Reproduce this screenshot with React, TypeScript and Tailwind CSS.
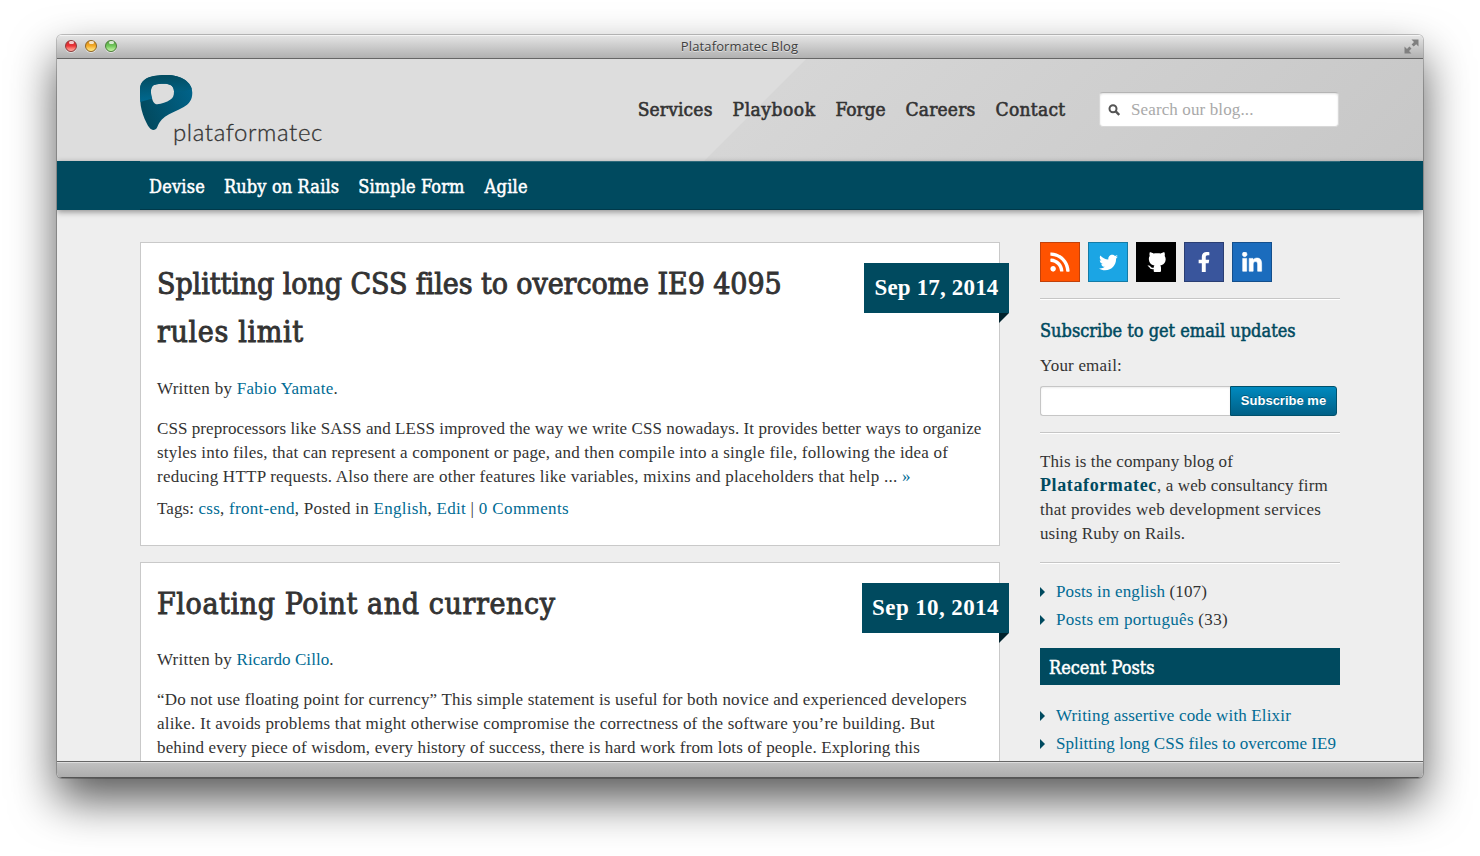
import type { ReactNode } from "react";
import { FaFacebookF, FaLinkedinIn, FaRss, FaTwitter } from "react-icons/fa";

const serif = "font-['Liberation_Serif',serif]";
const slab = "font-['DejaVu_Serif_Condensed','DejaVu_Serif',serif]";

function A({ children }: { children: ReactNode }) {
  return (
    <a href="#" className="text-[#006b94]">
      {children}
    </a>
  );
}

function TrafficLight({ className }: { className: string }) {
  return (
    <span
      className={`relative h-3 w-3 rounded-full border shadow-[0_1px_0_rgba(255,255,255,0.5)] ${className}`}
    >
      <span className="absolute left-[2.5px] top-0 h-[3px] w-[5px] rounded-full bg-white/75" />
    </span>
  );
}

function TitleBar() {
  return (
    <div className="flex h-[24px] shrink-0 items-center border-b border-[#666] bg-linear-to-b from-[#e6e6e6] to-[#b1b1b1] pl-2 pr-[4px] shadow-[inset_0_1px_0_#f4f4f4]">
      <div className="flex w-[115px] gap-2 pb-px">
        <TrafficLight className="border-[#8c3a3a] bg-linear-to-b from-[#c92b2f] via-[#ee3338] to-[#ffb0a8]" />
        <TrafficLight className="border-[#8f6420] bg-linear-to-b from-[#d08a1c] via-[#f6ac27] to-[#fff08a]" />
        <TrafficLight className="border-[#4a7d38] bg-linear-to-b from-[#57a043] via-[#72c95c] to-[#c8f8a8]" />
      </div>
      <div className="flex-1 pb-0.5 text-center font-['Open_Sans',sans-serif] text-[13px] leading-5 tracking-[0.13px] text-[#404040] [text-shadow:0_1px_0_rgba(255,255,255,0.5)]">
        Plataformatec Blog
      </div>
      <div className="flex w-[120px] justify-end pb-px">
        <svg width="15" height="15" viewBox="0 0 15 15" fill="#808080">
          <path d="M7.5 .5H14.5V7.5L12.2 5.3L9.700 7.600L7.600 5.500L10 3ZM.5 7.5L3 9.900L5.400 7.500L7.500 9.600L5 12L7.5 14.500H.5Z" />
        </svg>
      </div>
    </div>
  );
}

function Logo() {
  return (
    <a href="#" className="relative block h-[76px] w-[190px]">
      <svg width="54" height="56" viewBox="0 0 54 56">
        <defs>
          <linearGradient id="lower" x1="0" x2="1" y1="0.4" y2="0">
            <stop offset="0" stopColor="#024b61" />
            <stop offset="1" stopColor="#00668f" />
          </linearGradient>
          <linearGradient id="upper" x1="0.3" x2="0.4" y1="0" y2="1">
            <stop offset="0" stopColor="#034b5f" />
            <stop offset="1" stopColor="#006a92" />
          </linearGradient>
          <clipPath id="mark">
            <path
              clipRule="evenodd"
              d="M26.7 0C41 0 52.3 7 52.3 17.7C52.3 25 49 29 43.3 32.3C37 36 30 38 25 41.7C20 45.500 18.500 49 17.3 52C16.300 54.200 15 55 13.3 55C10.500 55 8.300 51.500 6.700 48.300C3.500 42 1.700 36 .8 31C0 25 0 19 .1 13.3C.5 7.500 4 4 10 2C15 .4 21 0 26.700 0ZM11 16.700C11 12.500 12.200 10.500 15 9.700C19 8.700 25 8.600 28.300 9.200C32.500 10 34 13 34 16.700C34 20.500 33 22.800 30.500 24.500C26.500 27.300 21.500 29 17.300 29.300C14.500 29.500 13 27 12 23.300C11.300 20.800 11 19 11 16.700Z"
            />
          </clipPath>
        </defs>
        <g clipPath="url(#mark)">
          <rect width="54" height="56" fill="url(#lower)" />
          <path d="M0 0H54V14C40 16 20 21 0 27Z" fill="url(#upper)" />
        </g>
      </svg>
      <span className="absolute left-[33px] top-[41px] font-['Lato',sans-serif] text-[24px] font-light leading-8 tracking-[0.6px] text-[#333] [-webkit-text-stroke:0.3px_#333]">
        plataformatec
      </span>
    </a>
  );
}

function Header() {
  return (
    <header className="h-[102px] shrink-0 bg-[linear-gradient(135deg,#dddddd_51%,#d6d6d6_51.05%,#c7c7c7_100%)] pl-[83px] pr-[84px]">
      <div className="flex h-full items-start justify-between pt-4">
        <Logo />
        <div className="flex pt-[18px]">
          <nav
            className={`mr-[33.5px] flex gap-5 text-[19px] leading-8 text-[#333] [-webkit-text-stroke:0.6px_#333] ${slab}`}
          >
            <a href="#" className="tracking-[0.17px]">Services</a>
            <a href="#" className="tracking-[0.53px]">Playbook</a>
            <a href="#" className="tracking-[-0.07px]">Forge</a>
            <a href="#" className="tracking-[0.2px]">Careers</a>
            <a href="#" className="tracking-[0.3px]">Contact</a>
          </nav>
          <div className="-mt-px flex h-[35px] w-[240px] items-center rounded-[4px] border border-[#d8d8d8] border-t-[#b4b4b4] bg-white pl-2 shadow-[inset_0_1px_2px_rgba(0,0,0,0.12)]">
            <svg width="12" height="12" viewBox="0 0 12 12" fill="none" stroke="#555" strokeWidth="2">
              <circle cx="5" cy="4.700" r="3.500" />
              <path d="M7.500 7.200L11.200 11" strokeWidth="2.400" />
            </svg>
            <span className={`ml-[11px] text-[17px] tracking-[0.12px] text-[#a9a9a9] ${serif}`}>
              Search our blog...
            </span>
          </div>
        </div>
      </div>
    </header>
  );
}

function CategoryBar() {
  return (
    <div className="relative h-[49px] shrink-0 bg-[#004a5f] px-[83px] shadow-[0_2px_6px_rgba(0,0,0,0.4)]">
      <nav
        className={`flex h-full gap-[19px] border-b border-t border-b-[#00394a] border-t-[#2f6a7b] pl-[9px] text-[18px] leading-[50px] text-white [-webkit-text-stroke:0.5px_#fff] ${slab}`}
      >
        <a href="#" className="tracking-[0.2px]">Devise</a>
        <a href="#" className="tracking-[0.13px]">Ruby on Rails</a>
        <a href="#" className="tracking-[0.12px]">Simple Form</a>
        <a href="#" className="ml-px tracking-[0.3px]">Agile</a>
      </nav>
    </div>
  );
}

function DateRibbon({ children, className }: { children: ReactNode; className: string }) {
  return (
    <div className="absolute -right-[10px] top-5">
      <div
        className={`h-[50px] bg-[#004a5f] text-center text-[23px] font-bold leading-[50px] text-white ${className}`}
      >
        {children}
      </div>
      <svg width="10" height="10" className="ml-auto block">
        <path d="M0 0H10L0 10Z" fill="#00222c" />
      </svg>
    </div>
  );
}

const card = "relative shrink-0 border border-[#c9c9c9] bg-white px-4 pt-[17px]";
const cardTitle = `text-[30px] leading-[48px] text-[#333] [-webkit-text-stroke:0.9px_#333] ${slab}`;

function Posts() {
  return (
    <main className={`flex w-[860px] flex-col gap-4 whitespace-nowrap text-[17px] leading-6 text-[#333] ${serif}`}>
      <article className={`h-[304px] ${card}`}>
        <DateRibbon className="w-[145px] tracking-[0.16px]">Sep 17, 2014</DateRibbon>
        <h2 className={cardTitle}>
          <span className="block tracking-[-0.08px]">Splitting long CSS files to overcome IE9 4095</span>
          <span className="block tracking-[0.65px]">rules limit</span>
        </h2>
        <p className="mt-[21px] tracking-[0.27px]">
          Written by <A>Fabio Yamate</A>.
        </p>
        <p className="mt-4">
          <span className="block tracking-[0.075px]">
            CSS preprocessors like SASS and LESS improved the way we write CSS nowadays. It provides better ways to organize
          </span>
          <span className="block tracking-[0.196px]">
            styles into files, that can represent a component or page, and then compile into a single file, following the idea of
          </span>
          <span className="block tracking-[0.238px]">
            reducing HTTP requests. Also there are other features like variables, mixins and placeholders that help ...{" "}
            <A>»</A>
          </span>
        </p>
        <p className="mt-2 tracking-[0.275px]">
          <span className="tracking-[0.1px]">Tags: </span>
          <A>css</A>, <span className="tracking-[0.27px]"><A>front-end</A>, Posted in </span>
          <A>English</A>, <A>Edit</A> | <span className="tracking-[0.4px]"><A>0 Comments</A></span>
        </p>
      </article>
      <article className={`h-[304px] ${card}`}>
        <DateRibbon className="w-[147px] tracking-[0.4px]">Sep 10, 2014</DateRibbon>
        <h2 className={`tracking-[0.6px] ${cardTitle}`}>Floating Point and currency</h2>
        <p className="mt-5 tracking-[0.05px]">
          <span className="tracking-[0.25px]">Written by </span>
          <A>Ricardo Cillo</A>.
        </p>
        <p className="mt-4">
          <span className="block tracking-[0.186px]">
            “Do not use floating point for currency” This simple statement is useful for both novice and experienced developers
          </span>
          <span className="block tracking-[0.21px]">
            alike. It avoids problems that might otherwise compromise the correctness of the software you’re building. But
          </span>
          <span className="block tracking-[0.142px]">
            behind every piece of wisdom, every history of success, there is hard work from lots of people. Exploring this
          </span>
        </p>
      </article>
    </main>
  );
}

function GithubCat() {
  return (
    <svg width="19" height="20" viewBox="0 0 19 20" fill="#fff">
      <path d="M2.800.3C4.300.3 5.500 1 6.500 1.500C8.800 1.100 11.800 1.100 13.800 1.500C14.800 1 16 .3 17.400.3C18 1.800 17.900 3 17.700 3.900C18.800 5.300 18.900 7.500 18.300 9.500C17.500 12 15.500 13 13.300 13.400C14 14.200 14 15.200 14 16V19.200L13.200 20H7.300L6.700 19.200V17.200C4 17.700 3 16.500 2.400 15.300C1.900 14.500 1.300 14.100 .5 13.700C2 13.100 3.200 13.900 4 15C4.700 15.900 5.600 16 6.700 15.700C6.700 14.700 6.900 14 7.400 13.400C5 13 3 12 2.300 9.500C1.600 7.300 1.700 5.300 2.700 3.900C2.300 2.700 2.400 1.300 2.800.3Z" />
    </svg>
  );
}

const social = "flex h-10 w-10 items-center justify-center border text-white";

function Rule() {
  return <div className="h-[2px] border-t border-[#c6c6c6] bg-white" />;
}

function Item({ children, className }: { children: ReactNode; className: string }) {
  return (
    <li className={`flex h-7 items-center ${className}`}>
      <svg width="5" height="10" className="mr-[11px]">
        <path d="M0 0L5 5L0 10Z" fill="#004a5f" />
      </svg>
      <span>{children}</span>
    </li>
  );
}

function Sidebar() {
  return (
    <aside className={`w-[300px] whitespace-nowrap text-[17px] leading-6 text-[#333] ${serif}`}>
      <div className="flex gap-2 pb-4">
        <a href="#" className={`border-[#c2410a] bg-[#ff5200] ${social}`}>
          <FaRss size={22} />
        </a>
        <a href="#" className={`border-[#147ba6] bg-[#1ba5e4] ${social}`}>
          <FaTwitter size={19} />
        </a>
        <a href="#" className={`border-black bg-black ${social}`}>
          <GithubCat />
        </a>
        <a href="#" className={`border-[#2a3e73] bg-[#39559c] ${social}`}>
          <FaFacebookF size={20} />
        </a>
        <a href="#" className={`border-[#144f8c] bg-[#1b6cbd] pt-0.5 ${social}`}>
          <FaLinkedinIn size={22} stroke="#fff" strokeWidth="14" />
        </a>
      </div>
      <Rule />
      <h3 className={`mt-[19px] text-[18px] text-[#004a5f] [-webkit-text-stroke:0.5px_#004a5f] ${slab}`}>
        Subscribe to get email updates
      </h3>
      <p className="mt-[11px] tracking-[0.18px]">Your email:</p>
      <div className="mb-4 mt-2 flex h-[30px] w-[297px]">
        <div className="flex-1 rounded-l-[3px] border border-r-0 border-[#c6c6c6] bg-white shadow-[inset_0_1px_2px_rgba(0,0,0,0.08)]" />
        <button className="w-[107px] rounded-r-[3px] border border-[#00506b] bg-linear-to-b from-[#008abf] to-[#006087] font-['Liberation_Sans',sans-serif] text-[13px] font-bold leading-[28px] text-white [text-shadow:0_-1px_0_rgba(0,0,0,0.3)]">
          Subscribe me
        </button>
      </div>
      <Rule />
      <p className="mb-4 mt-4">
        <span className="block tracking-[0.1px]">This is the company blog of</span>
        <span className="block h-6 tracking-[0.14px]">
          <b className="text-[18px] leading-none tracking-[0.61px] text-[#004a5f]">Plataformatec</b>, a web consultancy firm
        </span>
        <span className="block tracking-[0.24px]">that provides web development services</span>
        <span className="block tracking-[0.12px]">using Ruby on Rails.</span>
      </p>
      <Rule />
      <ul className="mb-[14px] mt-[14px]">
        <Item className="tracking-[0.145px]">
          <A>Posts in english</A> (107)
        </Item>
        <Item className="tracking-[0.31px]">
          <A>Posts em português</A> (33)
        </Item>
      </ul>
      <h3
        className={`h-[37px] bg-[#004a5f] pl-[9px] text-[18px] leading-[40px] text-white [-webkit-text-stroke:0.5px_#fff] ${slab}`}
      >
        Recent Posts
      </h3>
      <ul className="mt-[17px]">
        <Item className="tracking-[0.155px]">
          <A>Writing assertive code with Elixir</A>
        </Item>
        <Item className="tracking-[0.035px]">
          <A>Splitting long CSS files to overcome IE9</A>
        </Item>
      </ul>
    </aside>
  );
}

export default function App() {
  return (
    <div className="h-[856px] w-[1480px] overflow-hidden bg-white px-[57px] pt-[35px]">
      <div className="flex h-[743px] flex-col overflow-hidden rounded-[5px] shadow-[0_0_0_1px_rgba(0,0,0,0.22),0_22px_46px_rgba(0,0,0,0.66)]">
        <TitleBar />
        <div className="flex h-[702px] flex-col overflow-hidden bg-[#eee]">
          <Header />
          <CategoryBar />
          <div className="flex min-h-0 flex-1 items-start gap-10 pl-[83px] pt-8">
            <Posts />
            <Sidebar />
          </div>
        </div>
        <div className="flex-1 border-b border-t border-b-[#555] border-t-[#666] bg-linear-to-b from-[#c2c2c2] to-[#adadad] shadow-[inset_0_1px_0_#ddd]" />
      </div>
    </div>
  );
}
